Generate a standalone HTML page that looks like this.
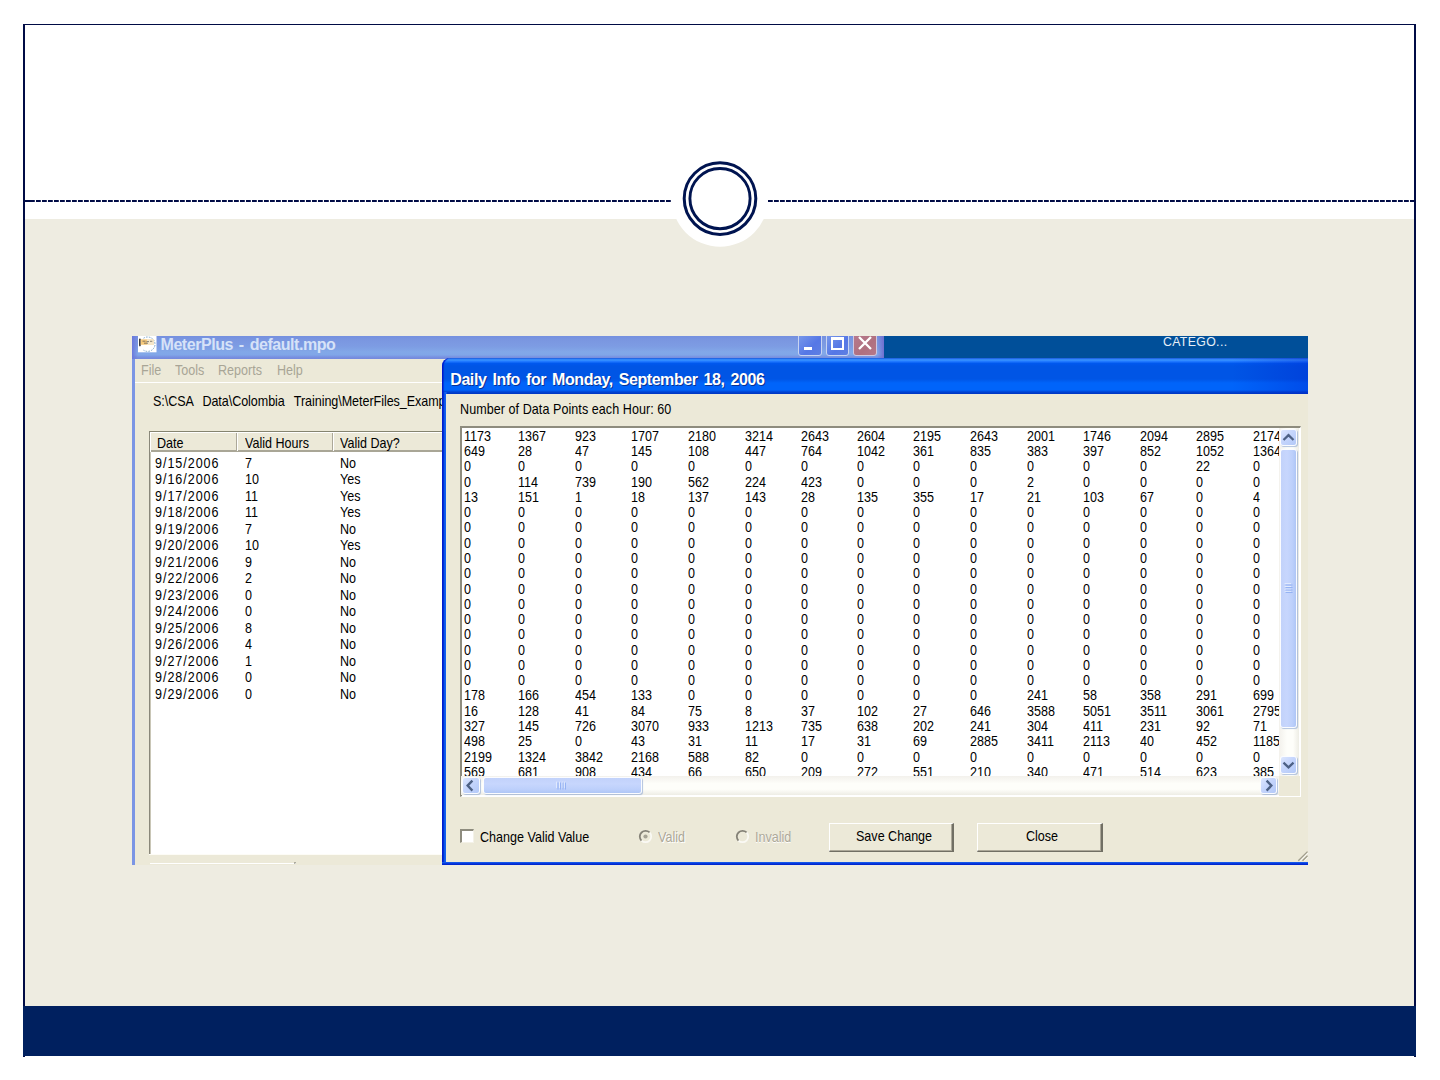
<!DOCTYPE html>
<html><head><meta charset="utf-8">
<style>
html,body{margin:0;padding:0}
body{width:1440px;height:1080px;background:#fff;position:relative;overflow:hidden;font-family:"Liberation Sans",sans-serif}
.a{position:absolute}
.t{position:absolute;white-space:pre;line-height:1;font-family:"Liberation Sans",sans-serif}
.tw{font-size:15px;transform:scaleX(0.837);transform-origin:0 0;margin-top:-0.85px}
</style></head><body>
<!-- slide frame -->
<div class="a" style="left:23px;top:24px;width:1389px;height:1032px;border-left:2px solid #000B45;border-right:2px solid #000B45;border-top:1.4px solid #000B45;box-sizing:content-box"></div>
<div class="a" style="left:25px;top:219px;width:1389px;height:787px;background:#EEECE1"></div>
<div class="a" style="left:23px;top:1006px;width:1393px;height:50px;background:#00205F"></div>
<svg class="a" style="left:0;top:0" width="1440" height="300" viewBox="0 0 1440 300">
  <circle cx="720" cy="198.5" r="48.3" fill="#fff"/>
  <line x1="30" y1="201" x2="672" y2="201" stroke="#000B45" stroke-width="2" stroke-dasharray="4.8 1.2"/>
  <line x1="768" y1="201" x2="1414" y2="201" stroke="#000B45" stroke-width="2" stroke-dasharray="4.8 1.2"/>
  <rect x="25" y="200" width="5" height="2" fill="#000B45"/>
  <circle cx="720" cy="198.6" r="35.8" fill="none" stroke="#001450" stroke-width="3.0"/>
  <circle cx="720" cy="198.6" r="30.1" fill="none" stroke="#001450" stroke-width="2.9"/>
</svg>

<!-- screenshot -->
<div class="a" id="shot" style="left:132px;top:336px;width:1176px;height:529.2px;overflow:hidden">
  <!-- main window title bar -->
  <div class="a" style="left:0;top:0;width:752px;height:23px;background:linear-gradient(#7590E0 0%,#7A96E0 15%,#7D9CE3 45%,#82A8E8 70%,#80A6E8 82%,#7890E0 92%,#7489DC 100%)"></div>
  <div class="a" style="left:0;top:0;width:6px;height:23px;background:linear-gradient(90deg,#6A78DC,rgba(120,150,225,0))"></div>
  <div class="a" style="left:745px;top:0;width:7px;height:23px;background:linear-gradient(90deg,rgba(120,140,225,0),#6F6FD0)"></div>

  <!-- main window title icon -->
  <svg class="a" style="left:6px;top:0" width="19" height="17" viewBox="0 0 19 17">
    <rect x="0" y="0" width="18.5" height="16.3" fill="#fff"/>
    <path d="M5.5 2.2 A7.4 7.2 0 1 1 5.5 14.2" fill="none" stroke="#6E9CC4" stroke-width="0.9" stroke-dasharray="1.6 1.1"/>
    <path d="M2.4 1.2 A7.4 7.2 0 0 0 2.4 2" fill="none"/>
    <rect x="1.1" y="2.4" width="1.6" height="8" rx="0.8" fill="#2A2A2A"/>
    <rect x="2.7" y="3.3" width="13" height="5.5" fill="#F6C46E" opacity="0.9"/>
    <rect x="9" y="3.3" width="6.7" height="5.5" fill="#F4F0E4" opacity="0.75"/>
    <path d="M4.5 5.2h3M8.5 5.6h2.5M12 5.3h2.3M6 7.2h4" stroke="#555" stroke-width="0.7"/>
  </svg>
  <div class="t" style="left:28.5px;top:1px;font-size:16px;font-weight:bold;color:#D6E2F8;letter-spacing:-0.45px;word-spacing:1.95px">MeterPlus - default.mpo</div>
  <!-- caption buttons -->
  <div class="a" style="left:666px;top:-3px;width:24px;height:23px;border:1px solid #C8D4F2;border-radius:3px;box-sizing:border-box;background:linear-gradient(135deg,#7A9AEA,#5577E6 60%,#5E7FE2)"></div>
  <div class="a" style="left:672.2px;top:10.5px;width:8px;height:3.6px;background:#fff"></div>
  <div class="a" style="left:694px;top:-3px;width:23px;height:23px;border:1px solid #C8D4F2;border-radius:3px;box-sizing:border-box;background:linear-gradient(135deg,#7A9AEA,#5577E6 60%,#5E7FE2)"></div>
  <div class="a" style="left:699.3px;top:1.3px;width:12.9px;height:12.7px;border:2px solid #fff;border-top-width:3px;box-sizing:border-box"></div>
  <div class="a" style="left:721px;top:-3px;width:24px;height:23px;border:1px solid #D0C8E0;border-radius:3px;box-sizing:border-box;background:linear-gradient(135deg,#B77A8E,#B0707F 60%,#B5788A)"></div>
  <svg class="a" style="left:721px;top:-3px" width="24" height="23"><path d="M6 4 L18 16 M18 4 L6 16" stroke="#fff" stroke-width="2.3"/></svg>
  <!-- main window frame & face -->
  <div class="a" style="left:0;top:23px;width:3px;height:507px;background:#7B95E4"></div>
  <div class="a" style="left:3px;top:23px;width:310px;height:507px;background:#ECE9D8"></div>
  <!-- menu -->
  <div class="t tw" style="left:9px;top:27.2px;color:#A8A596">File</div>
  <div class="t tw" style="left:42.5px;top:27.2px;color:#A8A596">Tools</div>
  <div class="t tw" style="left:85.5px;top:27.2px;color:#A8A596">Reports</div>
  <div class="t tw" style="left:144.5px;top:27.2px;color:#A8A596">Help</div>
  <div class="a" style="left:3px;top:46px;width:310px;height:1px;background:#fff"></div>
  <div class="t tw" style="left:20.5px;top:57.7px;color:#000;word-spacing:1.4px;letter-spacing:-0.06px">S:\CSA  Data\Colombia  Training\MeterFiles_Examples</div>
  <!-- listview -->
  <div class="a" style="left:16.6px;top:95px;width:300px;height:422.5px;background:#fff;border-left:1.4px solid #8A887A;border-top:1px solid #858470;box-sizing:border-box"></div>
  <div class="a" style="left:18px;top:96px;width:0.8px;height:421.5px;background:#C9C6B6"></div>
  <div class="a" style="left:17px;top:517.5px;width:300px;height:1.2px;background:#FDFCF6"></div>
  <div class="a" style="left:18px;top:96px;width:300px;height:20px;background:#ECE9D8;border-top:1px solid #fff;border-bottom:2px solid #A9A696;box-sizing:border-box"></div>
  <div class="a" style="left:18px;top:96px;width:1px;height:20px;background:#fff"></div>
  <div class="a" style="left:104px;top:97px;width:1px;height:18px;background:#ACA899"></div>
  <div class="a" style="left:105px;top:97px;width:1px;height:18px;background:#fff"></div>
  <div class="a" style="left:199.5px;top:97px;width:1px;height:18px;background:#ACA899"></div>
  <div class="a" style="left:200.5px;top:97px;width:1px;height:18px;background:#fff"></div>
  <div class="t tw" style="left:25.3px;top:99.7px;color:#000">Date</div>
  <div class="t tw" style="left:112.9px;top:99.7px;color:#000">Valid Hours</div>
  <div class="t tw" style="left:208.4px;top:99.7px;color:#000">Valid Day?</div>
  <div class="a" style="left:18px;top:527px;width:146px;height:1px;background:#fff"></div>
  <div class="a" style="left:161.5px;top:525.5px;width:2px;height:2px;background:#6E6C60;clip-path:polygon(100% 0,100% 100%,0 100%)"></div>
  <div class="t tw" style="left:23.4px;top:119.65px;letter-spacing:1.14px">9/15/2006</div><div class="t tw" style="left:113px;top:119.65px">7</div><div class="t tw" style="left:208px;top:119.65px">No</div>
  <div class="t tw" style="left:23.4px;top:136.16px;letter-spacing:1.14px">9/16/2006</div><div class="t tw" style="left:113px;top:136.16px">10</div><div class="t tw" style="left:208px;top:136.16px">Yes</div>
  <div class="t tw" style="left:23.4px;top:152.67px;letter-spacing:1.14px">9/17/2006</div><div class="t tw" style="left:113px;top:152.67px">11</div><div class="t tw" style="left:208px;top:152.67px">Yes</div>
  <div class="t tw" style="left:23.4px;top:169.18px;letter-spacing:1.14px">9/18/2006</div><div class="t tw" style="left:113px;top:169.18px">11</div><div class="t tw" style="left:208px;top:169.18px">Yes</div>
  <div class="t tw" style="left:23.4px;top:185.69px;letter-spacing:1.14px">9/19/2006</div><div class="t tw" style="left:113px;top:185.69px">7</div><div class="t tw" style="left:208px;top:185.69px">No</div>
  <div class="t tw" style="left:23.4px;top:202.20px;letter-spacing:1.14px">9/20/2006</div><div class="t tw" style="left:113px;top:202.20px">10</div><div class="t tw" style="left:208px;top:202.20px">Yes</div>
  <div class="t tw" style="left:23.4px;top:218.71px;letter-spacing:1.14px">9/21/2006</div><div class="t tw" style="left:113px;top:218.71px">9</div><div class="t tw" style="left:208px;top:218.71px">No</div>
  <div class="t tw" style="left:23.4px;top:235.22px;letter-spacing:1.14px">9/22/2006</div><div class="t tw" style="left:113px;top:235.22px">2</div><div class="t tw" style="left:208px;top:235.22px">No</div>
  <div class="t tw" style="left:23.4px;top:251.73px;letter-spacing:1.14px">9/23/2006</div><div class="t tw" style="left:113px;top:251.73px">0</div><div class="t tw" style="left:208px;top:251.73px">No</div>
  <div class="t tw" style="left:23.4px;top:268.24px;letter-spacing:1.14px">9/24/2006</div><div class="t tw" style="left:113px;top:268.24px">0</div><div class="t tw" style="left:208px;top:268.24px">No</div>
  <div class="t tw" style="left:23.4px;top:284.75px;letter-spacing:1.14px">9/25/2006</div><div class="t tw" style="left:113px;top:284.75px">8</div><div class="t tw" style="left:208px;top:284.75px">No</div>
  <div class="t tw" style="left:23.4px;top:301.26px;letter-spacing:1.14px">9/26/2006</div><div class="t tw" style="left:113px;top:301.26px">4</div><div class="t tw" style="left:208px;top:301.26px">No</div>
  <div class="t tw" style="left:23.4px;top:317.77px;letter-spacing:1.14px">9/27/2006</div><div class="t tw" style="left:113px;top:317.77px">1</div><div class="t tw" style="left:208px;top:317.77px">No</div>
  <div class="t tw" style="left:23.4px;top:334.28px;letter-spacing:1.14px">9/28/2006</div><div class="t tw" style="left:113px;top:334.28px">0</div><div class="t tw" style="left:208px;top:334.28px">No</div>
  <div class="t tw" style="left:23.4px;top:350.79px;letter-spacing:1.14px">9/29/2006</div><div class="t tw" style="left:113px;top:350.79px">0</div><div class="t tw" style="left:208px;top:350.79px">No</div>
  <!-- dark strip right -->
  <div class="a" style="left:752px;top:0;width:424px;height:23px;background:#004F99"></div>
  <div class="t" style="left:1031px;top:0px;font-size:12.3px;color:#E6EEF8;letter-spacing:0.35px">CATEGO...</div>
  <!-- dialog -->
  <div class="a" style="left:309.5px;top:22.4px;width:870px;height:508px;overflow:hidden">
    <!-- title bar -->
    <div class="a" style="left:0;top:0;width:870px;height:36px;border-radius:8px 0 0 0;box-shadow:inset 2px 0 1px -0.5px #0016CC;background:linear-gradient(#1C5ED8 0px,#2A7AF4 1px,#3A95FF 2px,#1F78FF 3.5px,#0058EE 5.5px,#0055E5 8px,#0055E5 21px,#0064FA 25px,#0064FA 32px,#0042D2 34px,#0038C0 36px)"></div>
    <div class="a" style="left:0;top:34px;width:5px;height:474px;background:linear-gradient(90deg,#0012C8 0,#0030D8 1.5px,#1767F2 3px,#0A55E8 4.5px)"></div>
    <div class="a" style="left:4.5px;top:36px;width:870px;height:468px;background:#ECE9D8"></div>
    <div class="a" style="left:0;top:504px;width:870px;height:3px;background:linear-gradient(#1A64EE,#0030DA 60%,#0020C8)"></div>
    <div class="a" style="left:790px;top:0;width:80px;height:36px;background:linear-gradient(90deg,rgba(0,30,200,0),rgba(0,30,200,0.35))"></div>
    <div class="t" style="left:9.8px;top:14.2px;font-size:16px;font-weight:bold;color:#0A1E6A;letter-spacing:-0.44px;word-spacing:2.05px;opacity:0.7">Daily Info for Monday, September 18, 2006</div>
    <div class="t" style="left:8.8px;top:13.2px;font-size:16px;font-weight:bold;color:#fff;letter-spacing:-0.44px;word-spacing:2.05px">Daily Info for Monday, September 18, 2006</div>
    <div class="t tw" style="left:18.3px;top:43.75px;color:#000;letter-spacing:0.07px">Number of Data Points each Hour: 60</div>
    <!-- listbox -->
    <div class="a" style="left:18.0px;top:67.8px;width:841px;height:371px;background:#fff;border-top:2px solid #8E8C7E;border-left:2px solid #8E8C7E;border-right:1px solid #fff;border-bottom:1px solid #fff;box-sizing:border-box"></div>
    <div class="a" style="left:20.0px;top:69.8px;width:817.5px;height:348px;overflow:hidden">
<div class="t tw" style="left:2.6px;top:0.45px">1173</div><div class="t tw" style="left:56.8px;top:0.45px">1367</div><div class="t tw" style="left:113.6px;top:0.45px">923</div><div class="t tw" style="left:169.8px;top:0.45px">1707</div><div class="t tw" style="left:226.4px;top:0.45px">2180</div><div class="t tw" style="left:283.0px;top:0.45px">3214</div><div class="t tw" style="left:339.2px;top:0.45px">2643</div><div class="t tw" style="left:395.2px;top:0.45px">2604</div><div class="t tw" style="left:451.9px;top:0.45px">2195</div><div class="t tw" style="left:508.7px;top:0.45px">2643</div><div class="t tw" style="left:565.3px;top:0.45px">2001</div><div class="t tw" style="left:621.9px;top:0.45px">1746</div><div class="t tw" style="left:678.7px;top:0.45px">2094</div><div class="t tw" style="left:734.7px;top:0.45px">2895</div><div class="t tw" style="left:791.3px;top:0.45px">2174</div>
<div class="t tw" style="left:2.6px;top:15.72px">649</div><div class="t tw" style="left:56.8px;top:15.72px">28</div><div class="t tw" style="left:113.6px;top:15.72px">47</div><div class="t tw" style="left:169.8px;top:15.72px">145</div><div class="t tw" style="left:226.4px;top:15.72px">108</div><div class="t tw" style="left:283.0px;top:15.72px">447</div><div class="t tw" style="left:339.2px;top:15.72px">764</div><div class="t tw" style="left:395.2px;top:15.72px">1042</div><div class="t tw" style="left:451.9px;top:15.72px">361</div><div class="t tw" style="left:508.7px;top:15.72px">835</div><div class="t tw" style="left:565.3px;top:15.72px">383</div><div class="t tw" style="left:621.9px;top:15.72px">397</div><div class="t tw" style="left:678.7px;top:15.72px">852</div><div class="t tw" style="left:734.7px;top:15.72px">1052</div><div class="t tw" style="left:791.3px;top:15.72px">1364</div>
<div class="t tw" style="left:2.6px;top:31.00px">0</div><div class="t tw" style="left:56.8px;top:31.00px">0</div><div class="t tw" style="left:113.6px;top:31.00px">0</div><div class="t tw" style="left:169.8px;top:31.00px">0</div><div class="t tw" style="left:226.4px;top:31.00px">0</div><div class="t tw" style="left:283.0px;top:31.00px">0</div><div class="t tw" style="left:339.2px;top:31.00px">0</div><div class="t tw" style="left:395.2px;top:31.00px">0</div><div class="t tw" style="left:451.9px;top:31.00px">0</div><div class="t tw" style="left:508.7px;top:31.00px">0</div><div class="t tw" style="left:565.3px;top:31.00px">0</div><div class="t tw" style="left:621.9px;top:31.00px">0</div><div class="t tw" style="left:678.7px;top:31.00px">0</div><div class="t tw" style="left:734.7px;top:31.00px">22</div><div class="t tw" style="left:791.3px;top:31.00px">0</div>
<div class="t tw" style="left:2.6px;top:46.27px">0</div><div class="t tw" style="left:56.8px;top:46.27px">114</div><div class="t tw" style="left:113.6px;top:46.27px">739</div><div class="t tw" style="left:169.8px;top:46.27px">190</div><div class="t tw" style="left:226.4px;top:46.27px">562</div><div class="t tw" style="left:283.0px;top:46.27px">224</div><div class="t tw" style="left:339.2px;top:46.27px">423</div><div class="t tw" style="left:395.2px;top:46.27px">0</div><div class="t tw" style="left:451.9px;top:46.27px">0</div><div class="t tw" style="left:508.7px;top:46.27px">0</div><div class="t tw" style="left:565.3px;top:46.27px">2</div><div class="t tw" style="left:621.9px;top:46.27px">0</div><div class="t tw" style="left:678.7px;top:46.27px">0</div><div class="t tw" style="left:734.7px;top:46.27px">0</div><div class="t tw" style="left:791.3px;top:46.27px">0</div>
<div class="t tw" style="left:2.6px;top:61.55px">13</div><div class="t tw" style="left:56.8px;top:61.55px">151</div><div class="t tw" style="left:113.6px;top:61.55px">1</div><div class="t tw" style="left:169.8px;top:61.55px">18</div><div class="t tw" style="left:226.4px;top:61.55px">137</div><div class="t tw" style="left:283.0px;top:61.55px">143</div><div class="t tw" style="left:339.2px;top:61.55px">28</div><div class="t tw" style="left:395.2px;top:61.55px">135</div><div class="t tw" style="left:451.9px;top:61.55px">355</div><div class="t tw" style="left:508.7px;top:61.55px">17</div><div class="t tw" style="left:565.3px;top:61.55px">21</div><div class="t tw" style="left:621.9px;top:61.55px">103</div><div class="t tw" style="left:678.7px;top:61.55px">67</div><div class="t tw" style="left:734.7px;top:61.55px">0</div><div class="t tw" style="left:791.3px;top:61.55px">4</div>
<div class="t tw" style="left:2.6px;top:76.82px">0</div><div class="t tw" style="left:56.8px;top:76.82px">0</div><div class="t tw" style="left:113.6px;top:76.82px">0</div><div class="t tw" style="left:169.8px;top:76.82px">0</div><div class="t tw" style="left:226.4px;top:76.82px">0</div><div class="t tw" style="left:283.0px;top:76.82px">0</div><div class="t tw" style="left:339.2px;top:76.82px">0</div><div class="t tw" style="left:395.2px;top:76.82px">0</div><div class="t tw" style="left:451.9px;top:76.82px">0</div><div class="t tw" style="left:508.7px;top:76.82px">0</div><div class="t tw" style="left:565.3px;top:76.82px">0</div><div class="t tw" style="left:621.9px;top:76.82px">0</div><div class="t tw" style="left:678.7px;top:76.82px">0</div><div class="t tw" style="left:734.7px;top:76.82px">0</div><div class="t tw" style="left:791.3px;top:76.82px">0</div>
<div class="t tw" style="left:2.6px;top:92.10px">0</div><div class="t tw" style="left:56.8px;top:92.10px">0</div><div class="t tw" style="left:113.6px;top:92.10px">0</div><div class="t tw" style="left:169.8px;top:92.10px">0</div><div class="t tw" style="left:226.4px;top:92.10px">0</div><div class="t tw" style="left:283.0px;top:92.10px">0</div><div class="t tw" style="left:339.2px;top:92.10px">0</div><div class="t tw" style="left:395.2px;top:92.10px">0</div><div class="t tw" style="left:451.9px;top:92.10px">0</div><div class="t tw" style="left:508.7px;top:92.10px">0</div><div class="t tw" style="left:565.3px;top:92.10px">0</div><div class="t tw" style="left:621.9px;top:92.10px">0</div><div class="t tw" style="left:678.7px;top:92.10px">0</div><div class="t tw" style="left:734.7px;top:92.10px">0</div><div class="t tw" style="left:791.3px;top:92.10px">0</div>
<div class="t tw" style="left:2.6px;top:107.37px">0</div><div class="t tw" style="left:56.8px;top:107.37px">0</div><div class="t tw" style="left:113.6px;top:107.37px">0</div><div class="t tw" style="left:169.8px;top:107.37px">0</div><div class="t tw" style="left:226.4px;top:107.37px">0</div><div class="t tw" style="left:283.0px;top:107.37px">0</div><div class="t tw" style="left:339.2px;top:107.37px">0</div><div class="t tw" style="left:395.2px;top:107.37px">0</div><div class="t tw" style="left:451.9px;top:107.37px">0</div><div class="t tw" style="left:508.7px;top:107.37px">0</div><div class="t tw" style="left:565.3px;top:107.37px">0</div><div class="t tw" style="left:621.9px;top:107.37px">0</div><div class="t tw" style="left:678.7px;top:107.37px">0</div><div class="t tw" style="left:734.7px;top:107.37px">0</div><div class="t tw" style="left:791.3px;top:107.37px">0</div>
<div class="t tw" style="left:2.6px;top:122.65px">0</div><div class="t tw" style="left:56.8px;top:122.65px">0</div><div class="t tw" style="left:113.6px;top:122.65px">0</div><div class="t tw" style="left:169.8px;top:122.65px">0</div><div class="t tw" style="left:226.4px;top:122.65px">0</div><div class="t tw" style="left:283.0px;top:122.65px">0</div><div class="t tw" style="left:339.2px;top:122.65px">0</div><div class="t tw" style="left:395.2px;top:122.65px">0</div><div class="t tw" style="left:451.9px;top:122.65px">0</div><div class="t tw" style="left:508.7px;top:122.65px">0</div><div class="t tw" style="left:565.3px;top:122.65px">0</div><div class="t tw" style="left:621.9px;top:122.65px">0</div><div class="t tw" style="left:678.7px;top:122.65px">0</div><div class="t tw" style="left:734.7px;top:122.65px">0</div><div class="t tw" style="left:791.3px;top:122.65px">0</div>
<div class="t tw" style="left:2.6px;top:137.93px">0</div><div class="t tw" style="left:56.8px;top:137.93px">0</div><div class="t tw" style="left:113.6px;top:137.93px">0</div><div class="t tw" style="left:169.8px;top:137.93px">0</div><div class="t tw" style="left:226.4px;top:137.93px">0</div><div class="t tw" style="left:283.0px;top:137.93px">0</div><div class="t tw" style="left:339.2px;top:137.93px">0</div><div class="t tw" style="left:395.2px;top:137.93px">0</div><div class="t tw" style="left:451.9px;top:137.93px">0</div><div class="t tw" style="left:508.7px;top:137.93px">0</div><div class="t tw" style="left:565.3px;top:137.93px">0</div><div class="t tw" style="left:621.9px;top:137.93px">0</div><div class="t tw" style="left:678.7px;top:137.93px">0</div><div class="t tw" style="left:734.7px;top:137.93px">0</div><div class="t tw" style="left:791.3px;top:137.93px">0</div>
<div class="t tw" style="left:2.6px;top:153.20px">0</div><div class="t tw" style="left:56.8px;top:153.20px">0</div><div class="t tw" style="left:113.6px;top:153.20px">0</div><div class="t tw" style="left:169.8px;top:153.20px">0</div><div class="t tw" style="left:226.4px;top:153.20px">0</div><div class="t tw" style="left:283.0px;top:153.20px">0</div><div class="t tw" style="left:339.2px;top:153.20px">0</div><div class="t tw" style="left:395.2px;top:153.20px">0</div><div class="t tw" style="left:451.9px;top:153.20px">0</div><div class="t tw" style="left:508.7px;top:153.20px">0</div><div class="t tw" style="left:565.3px;top:153.20px">0</div><div class="t tw" style="left:621.9px;top:153.20px">0</div><div class="t tw" style="left:678.7px;top:153.20px">0</div><div class="t tw" style="left:734.7px;top:153.20px">0</div><div class="t tw" style="left:791.3px;top:153.20px">0</div>
<div class="t tw" style="left:2.6px;top:168.47px">0</div><div class="t tw" style="left:56.8px;top:168.47px">0</div><div class="t tw" style="left:113.6px;top:168.47px">0</div><div class="t tw" style="left:169.8px;top:168.47px">0</div><div class="t tw" style="left:226.4px;top:168.47px">0</div><div class="t tw" style="left:283.0px;top:168.47px">0</div><div class="t tw" style="left:339.2px;top:168.47px">0</div><div class="t tw" style="left:395.2px;top:168.47px">0</div><div class="t tw" style="left:451.9px;top:168.47px">0</div><div class="t tw" style="left:508.7px;top:168.47px">0</div><div class="t tw" style="left:565.3px;top:168.47px">0</div><div class="t tw" style="left:621.9px;top:168.47px">0</div><div class="t tw" style="left:678.7px;top:168.47px">0</div><div class="t tw" style="left:734.7px;top:168.47px">0</div><div class="t tw" style="left:791.3px;top:168.47px">0</div>
<div class="t tw" style="left:2.6px;top:183.75px">0</div><div class="t tw" style="left:56.8px;top:183.75px">0</div><div class="t tw" style="left:113.6px;top:183.75px">0</div><div class="t tw" style="left:169.8px;top:183.75px">0</div><div class="t tw" style="left:226.4px;top:183.75px">0</div><div class="t tw" style="left:283.0px;top:183.75px">0</div><div class="t tw" style="left:339.2px;top:183.75px">0</div><div class="t tw" style="left:395.2px;top:183.75px">0</div><div class="t tw" style="left:451.9px;top:183.75px">0</div><div class="t tw" style="left:508.7px;top:183.75px">0</div><div class="t tw" style="left:565.3px;top:183.75px">0</div><div class="t tw" style="left:621.9px;top:183.75px">0</div><div class="t tw" style="left:678.7px;top:183.75px">0</div><div class="t tw" style="left:734.7px;top:183.75px">0</div><div class="t tw" style="left:791.3px;top:183.75px">0</div>
<div class="t tw" style="left:2.6px;top:199.03px">0</div><div class="t tw" style="left:56.8px;top:199.03px">0</div><div class="t tw" style="left:113.6px;top:199.03px">0</div><div class="t tw" style="left:169.8px;top:199.03px">0</div><div class="t tw" style="left:226.4px;top:199.03px">0</div><div class="t tw" style="left:283.0px;top:199.03px">0</div><div class="t tw" style="left:339.2px;top:199.03px">0</div><div class="t tw" style="left:395.2px;top:199.03px">0</div><div class="t tw" style="left:451.9px;top:199.03px">0</div><div class="t tw" style="left:508.7px;top:199.03px">0</div><div class="t tw" style="left:565.3px;top:199.03px">0</div><div class="t tw" style="left:621.9px;top:199.03px">0</div><div class="t tw" style="left:678.7px;top:199.03px">0</div><div class="t tw" style="left:734.7px;top:199.03px">0</div><div class="t tw" style="left:791.3px;top:199.03px">0</div>
<div class="t tw" style="left:2.6px;top:214.30px">0</div><div class="t tw" style="left:56.8px;top:214.30px">0</div><div class="t tw" style="left:113.6px;top:214.30px">0</div><div class="t tw" style="left:169.8px;top:214.30px">0</div><div class="t tw" style="left:226.4px;top:214.30px">0</div><div class="t tw" style="left:283.0px;top:214.30px">0</div><div class="t tw" style="left:339.2px;top:214.30px">0</div><div class="t tw" style="left:395.2px;top:214.30px">0</div><div class="t tw" style="left:451.9px;top:214.30px">0</div><div class="t tw" style="left:508.7px;top:214.30px">0</div><div class="t tw" style="left:565.3px;top:214.30px">0</div><div class="t tw" style="left:621.9px;top:214.30px">0</div><div class="t tw" style="left:678.7px;top:214.30px">0</div><div class="t tw" style="left:734.7px;top:214.30px">0</div><div class="t tw" style="left:791.3px;top:214.30px">0</div>
<div class="t tw" style="left:2.6px;top:229.57px">0</div><div class="t tw" style="left:56.8px;top:229.57px">0</div><div class="t tw" style="left:113.6px;top:229.57px">0</div><div class="t tw" style="left:169.8px;top:229.57px">0</div><div class="t tw" style="left:226.4px;top:229.57px">0</div><div class="t tw" style="left:283.0px;top:229.57px">0</div><div class="t tw" style="left:339.2px;top:229.57px">0</div><div class="t tw" style="left:395.2px;top:229.57px">0</div><div class="t tw" style="left:451.9px;top:229.57px">0</div><div class="t tw" style="left:508.7px;top:229.57px">0</div><div class="t tw" style="left:565.3px;top:229.57px">0</div><div class="t tw" style="left:621.9px;top:229.57px">0</div><div class="t tw" style="left:678.7px;top:229.57px">0</div><div class="t tw" style="left:734.7px;top:229.57px">0</div><div class="t tw" style="left:791.3px;top:229.57px">0</div>
<div class="t tw" style="left:2.6px;top:244.85px">0</div><div class="t tw" style="left:56.8px;top:244.85px">0</div><div class="t tw" style="left:113.6px;top:244.85px">0</div><div class="t tw" style="left:169.8px;top:244.85px">0</div><div class="t tw" style="left:226.4px;top:244.85px">0</div><div class="t tw" style="left:283.0px;top:244.85px">0</div><div class="t tw" style="left:339.2px;top:244.85px">0</div><div class="t tw" style="left:395.2px;top:244.85px">0</div><div class="t tw" style="left:451.9px;top:244.85px">0</div><div class="t tw" style="left:508.7px;top:244.85px">0</div><div class="t tw" style="left:565.3px;top:244.85px">0</div><div class="t tw" style="left:621.9px;top:244.85px">0</div><div class="t tw" style="left:678.7px;top:244.85px">0</div><div class="t tw" style="left:734.7px;top:244.85px">0</div><div class="t tw" style="left:791.3px;top:244.85px">0</div>
<div class="t tw" style="left:2.6px;top:260.12px">178</div><div class="t tw" style="left:56.8px;top:260.12px">166</div><div class="t tw" style="left:113.6px;top:260.12px">454</div><div class="t tw" style="left:169.8px;top:260.12px">133</div><div class="t tw" style="left:226.4px;top:260.12px">0</div><div class="t tw" style="left:283.0px;top:260.12px">0</div><div class="t tw" style="left:339.2px;top:260.12px">0</div><div class="t tw" style="left:395.2px;top:260.12px">0</div><div class="t tw" style="left:451.9px;top:260.12px">0</div><div class="t tw" style="left:508.7px;top:260.12px">0</div><div class="t tw" style="left:565.3px;top:260.12px">241</div><div class="t tw" style="left:621.9px;top:260.12px">58</div><div class="t tw" style="left:678.7px;top:260.12px">358</div><div class="t tw" style="left:734.7px;top:260.12px">291</div><div class="t tw" style="left:791.3px;top:260.12px">699</div>
<div class="t tw" style="left:2.6px;top:275.40px">16</div><div class="t tw" style="left:56.8px;top:275.40px">128</div><div class="t tw" style="left:113.6px;top:275.40px">41</div><div class="t tw" style="left:169.8px;top:275.40px">84</div><div class="t tw" style="left:226.4px;top:275.40px">75</div><div class="t tw" style="left:283.0px;top:275.40px">8</div><div class="t tw" style="left:339.2px;top:275.40px">37</div><div class="t tw" style="left:395.2px;top:275.40px">102</div><div class="t tw" style="left:451.9px;top:275.40px">27</div><div class="t tw" style="left:508.7px;top:275.40px">646</div><div class="t tw" style="left:565.3px;top:275.40px">3588</div><div class="t tw" style="left:621.9px;top:275.40px">5051</div><div class="t tw" style="left:678.7px;top:275.40px">3511</div><div class="t tw" style="left:734.7px;top:275.40px">3061</div><div class="t tw" style="left:791.3px;top:275.40px">2795</div>
<div class="t tw" style="left:2.6px;top:290.68px">327</div><div class="t tw" style="left:56.8px;top:290.68px">145</div><div class="t tw" style="left:113.6px;top:290.68px">726</div><div class="t tw" style="left:169.8px;top:290.68px">3070</div><div class="t tw" style="left:226.4px;top:290.68px">933</div><div class="t tw" style="left:283.0px;top:290.68px">1213</div><div class="t tw" style="left:339.2px;top:290.68px">735</div><div class="t tw" style="left:395.2px;top:290.68px">638</div><div class="t tw" style="left:451.9px;top:290.68px">202</div><div class="t tw" style="left:508.7px;top:290.68px">241</div><div class="t tw" style="left:565.3px;top:290.68px">304</div><div class="t tw" style="left:621.9px;top:290.68px">411</div><div class="t tw" style="left:678.7px;top:290.68px">231</div><div class="t tw" style="left:734.7px;top:290.68px">92</div><div class="t tw" style="left:791.3px;top:290.68px">71</div>
<div class="t tw" style="left:2.6px;top:305.95px">498</div><div class="t tw" style="left:56.8px;top:305.95px">25</div><div class="t tw" style="left:113.6px;top:305.95px">0</div><div class="t tw" style="left:169.8px;top:305.95px">43</div><div class="t tw" style="left:226.4px;top:305.95px">31</div><div class="t tw" style="left:283.0px;top:305.95px">11</div><div class="t tw" style="left:339.2px;top:305.95px">17</div><div class="t tw" style="left:395.2px;top:305.95px">31</div><div class="t tw" style="left:451.9px;top:305.95px">69</div><div class="t tw" style="left:508.7px;top:305.95px">2885</div><div class="t tw" style="left:565.3px;top:305.95px">3411</div><div class="t tw" style="left:621.9px;top:305.95px">2113</div><div class="t tw" style="left:678.7px;top:305.95px">40</div><div class="t tw" style="left:734.7px;top:305.95px">452</div><div class="t tw" style="left:791.3px;top:305.95px">1185</div>
<div class="t tw" style="left:2.6px;top:321.23px">2199</div><div class="t tw" style="left:56.8px;top:321.23px">1324</div><div class="t tw" style="left:113.6px;top:321.23px">3842</div><div class="t tw" style="left:169.8px;top:321.23px">2168</div><div class="t tw" style="left:226.4px;top:321.23px">588</div><div class="t tw" style="left:283.0px;top:321.23px">82</div><div class="t tw" style="left:339.2px;top:321.23px">0</div><div class="t tw" style="left:395.2px;top:321.23px">0</div><div class="t tw" style="left:451.9px;top:321.23px">0</div><div class="t tw" style="left:508.7px;top:321.23px">0</div><div class="t tw" style="left:565.3px;top:321.23px">0</div><div class="t tw" style="left:621.9px;top:321.23px">0</div><div class="t tw" style="left:678.7px;top:321.23px">0</div><div class="t tw" style="left:734.7px;top:321.23px">0</div><div class="t tw" style="left:791.3px;top:321.23px">0</div>
<div class="t tw" style="left:2.6px;top:336.50px">569</div><div class="t tw" style="left:56.8px;top:336.50px">681</div><div class="t tw" style="left:113.6px;top:336.50px">908</div><div class="t tw" style="left:169.8px;top:336.50px">434</div><div class="t tw" style="left:226.4px;top:336.50px">66</div><div class="t tw" style="left:283.0px;top:336.50px">650</div><div class="t tw" style="left:339.2px;top:336.50px">209</div><div class="t tw" style="left:395.2px;top:336.50px">272</div><div class="t tw" style="left:451.9px;top:336.50px">551</div><div class="t tw" style="left:508.7px;top:336.50px">210</div><div class="t tw" style="left:565.3px;top:336.50px">340</div><div class="t tw" style="left:621.9px;top:336.50px">471</div><div class="t tw" style="left:678.7px;top:336.50px">514</div><div class="t tw" style="left:734.7px;top:336.50px">623</div><div class="t tw" style="left:791.3px;top:336.50px">385</div>
    </div>
    <!-- v scrollbar -->
    <div class="a" style="left:837.5px;top:69.6px;width:20px;height:348px;background:linear-gradient(90deg,#F3F1EC,#FEFEFA 40%,#FEFEFA 70%,#EEEDE5)"></div>
    <div class="a" style="left:838.50px;top:70.60px;width:17.00px;height:17.00px;border-radius:3px;background:#FBFCFF;box-shadow:1px 1px 0.8px rgba(120,150,200,0.55)"></div>
    <div class="a" style="left:839.50px;top:71.60px;width:15.00px;height:15.00px;border-radius:2px;background:linear-gradient(135deg,#DCE6FE 0%,#C5D5FC 45%,#B3C9F8 100%)"></div>
    <svg class="a" style="left:839.50px;top:71.60px" width="15" height="15"><path d="M2.5 10 L7.5 5.2 L12.5 10" fill="none" stroke="#4D6185" stroke-width="2.3"/></svg>
    <div class="a" style="left:838.50px;top:90.60px;width:17.00px;height:279.00px;border-radius:3px;background:#FBFCFF;box-shadow:1px 1px 0.8px rgba(120,150,200,0.55)"></div>
    <div class="a" style="left:839.50px;top:91.60px;width:15.00px;height:277.00px;border-radius:2px;background:linear-gradient(90deg,#C2D2FA 0%,#C7D6FD 40%,#BDD0FB 75%,#AFC6F6 100%)"></div>
    <svg class="a" style="left:842.50px;top:224.60px" width="10" height="10"><path d="M0.6 0.6H7M0.6 3.5H7M0.6 6.3H7M0.6 8.8H7" stroke="#E6EEFD" stroke-width="0.9"/><path d="M1.5 2H8.6M1.5 4.5H8.6M1.5 7H8.6M1.5 9.5H8.6" stroke="#8EAEF2" stroke-width="0.9"/></svg>
    <div class="a" style="left:838.50px;top:398.10px;width:17.00px;height:17.50px;border-radius:3px;background:#FBFCFF;box-shadow:1px 1px 0.8px rgba(120,150,200,0.55)"></div>
    <div class="a" style="left:839.50px;top:399.10px;width:15.00px;height:15.50px;border-radius:2px;background:linear-gradient(135deg,#DCE6FE 0%,#C5D5FC 45%,#B3C9F8 100%)"></div>
    <svg class="a" style="left:839.50px;top:399.10px" width="15" height="16"><path d="M2.5 5.6 L7.5 10.4 L12.5 5.6" fill="none" stroke="#4D6185" stroke-width="2.3"/></svg>
    <!-- h scrollbar -->
    <div class="a" style="left:19.5px;top:417.6px;width:818px;height:19.5px;background:linear-gradient(#F3F1EC,#FEFEFA 40%,#FEFEFA 70%,#EEEDE5)"></div>
    <div class="a" style="left:20.50px;top:418.40px;width:17.80px;height:17.30px;border-radius:3px;background:#FBFCFF;box-shadow:1px 1px 0.8px rgba(120,150,200,0.55)"></div>
    <div class="a" style="left:21.50px;top:419.40px;width:15.80px;height:15.30px;border-radius:2px;background:linear-gradient(135deg,#DCE6FE 0%,#C5D5FC 45%,#B3C9F8 100%)"></div>
    <svg class="a" style="left:21.50px;top:419.40px" width="16" height="16"><path d="M9.4 2.6 L4.6 7.6 L9.4 12.6" fill="none" stroke="#4D6185" stroke-width="2.3"/></svg>
    <div class="a" style="left:41.00px;top:418.40px;width:159.50px;height:17.30px;border-radius:3px;background:#FBFCFF;box-shadow:1px 1px 0.8px rgba(120,150,200,0.55)"></div>
    <div class="a" style="left:42.00px;top:419.40px;width:157.50px;height:15.30px;border-radius:2px;background:linear-gradient(180deg,#C2D2FA 0%,#C7D6FD 40%,#BDD0FB 75%,#AFC6F6 100%)"></div>
    <svg class="a" style="left:114.50px;top:422.60px" width="10" height="10"><path d="M0.6 0.6V7M3.5 0.6V7M6.3 0.6V7M8.8 0.6V7" stroke="#E6EEFD" stroke-width="0.9"/><path d="M2 1.5V8.6M4.5 1.5V8.6M7 1.5V8.6M9.5 1.5V8.6" stroke="#8EAEF2" stroke-width="0.9"/></svg>
    <div class="a" style="left:818.50px;top:418.90px;width:17.00px;height:17.00px;border-radius:3px;background:#FBFCFF;box-shadow:1px 1px 0.8px rgba(120,150,200,0.55)"></div>
    <div class="a" style="left:819.50px;top:419.90px;width:15.00px;height:15.00px;border-radius:2px;background:linear-gradient(135deg,#DCE6FE 0%,#C5D5FC 45%,#B3C9F8 100%)"></div>
    <svg class="a" style="left:819.50px;top:419.90px" width="15" height="15"><path d="M5.6 2.6 L10.4 7.6 L5.6 12.6" fill="none" stroke="#4D6185" stroke-width="2.3"/></svg>
    <div class="a" style="left:837.5px;top:417.6px;width:20.5px;height:20px;background:#ECE9D8"></div>
    <!-- bottom controls -->
    <div class="a" style="left:18.0px;top:470.2px;width:14.8px;height:14.8px;background:#fff;border-top:2px solid #8E8C7E;border-left:2px solid #8E8C7E;border-right:1px solid #F4F2E8;border-bottom:1px solid #F4F2E8;box-sizing:border-box"></div>
    <div class="t tw" style="left:38.7px;top:471.40px;color:#000">Change Valid Value</div>
    <svg class="a" style="left:196.0px;top:470.7px" width="15" height="15"><circle cx="7.5" cy="7.5" r="5.7" fill="none" stroke="#FAF9F4" stroke-width="1.7"/><path d="M3.4 11.6 A5.8 5.8 0 0 1 11.6 3.4" fill="none" stroke="#858276" stroke-width="1.8"/><circle cx="7.5" cy="7.5" r="2.1" fill="#A5A294"/></svg>
    <div class="t tw" style="left:217.3px;top:472.45px;color:#fff">Valid</div>
    <div class="t tw" style="left:216.8px;top:471.45px;color:#ACA899">Valid</div>
    <svg class="a" style="left:293.7px;top:470.7px" width="15" height="15"><circle cx="7.5" cy="7.5" r="5.7" fill="none" stroke="#FAF9F4" stroke-width="1.7"/><path d="M3.4 11.6 A5.8 5.8 0 0 1 11.6 3.4" fill="none" stroke="#858276" stroke-width="1.8"/></svg>
    <div class="t tw" style="left:313.8px;top:472.45px;color:#fff">Invalid</div>
    <div class="t tw" style="left:313.3px;top:471.45px;color:#ACA899">Invalid</div>
    <div class="a" style="left:387.4px;top:464.6px;width:125.4px;height:29.2px;background:#ECE9D8;border-top:1px solid #fff;border-left:1px solid #fff;border-right:2px solid #716F64;border-bottom:2px solid #716F64;box-sizing:border-box"></div>
    <div class="a" style="left:388.4px;top:491.8px;width:122.4px;height:1px;background:#ACA899"></div>
    <div class="a" style="left:509.8px;top:465.6px;width:1px;height:26.2px;background:#ACA899"></div>
    <div class="t tw" style="left:414.0px;top:470.5px;color:#000">Save Change</div>
    <div class="a" style="left:535.5px;top:464.5px;width:126px;height:29.25px;background:#ECE9D8;border-top:1px solid #fff;border-left:1px solid #fff;border-right:2px solid #716F64;border-bottom:2px solid #716F64;box-sizing:border-box"></div>
    <div class="a" style="left:536.5px;top:491.8px;width:123px;height:1px;background:#ACA899"></div>
    <div class="a" style="left:658.5px;top:465.5px;width:1px;height:26.25px;background:#ACA899"></div>
    <div class="t tw" style="left:584.2px;top:470.8px;color:#000">Close</div>
    <svg class="a" style="left:854.5px;top:489.6px" width="14" height="14"><path d="M11.5 3.6 L2.3 12.8 M11.5 7.8 L6.5 12.8" stroke="#A09D8C" stroke-width="1.3"/><path d="M12.5 4.6 L4.3 12.8 M12.5 8.8 L8.5 12.8" stroke="#FFFFFF" stroke-width="0.8"/></svg>
  </div>
</div>
</body></html>
